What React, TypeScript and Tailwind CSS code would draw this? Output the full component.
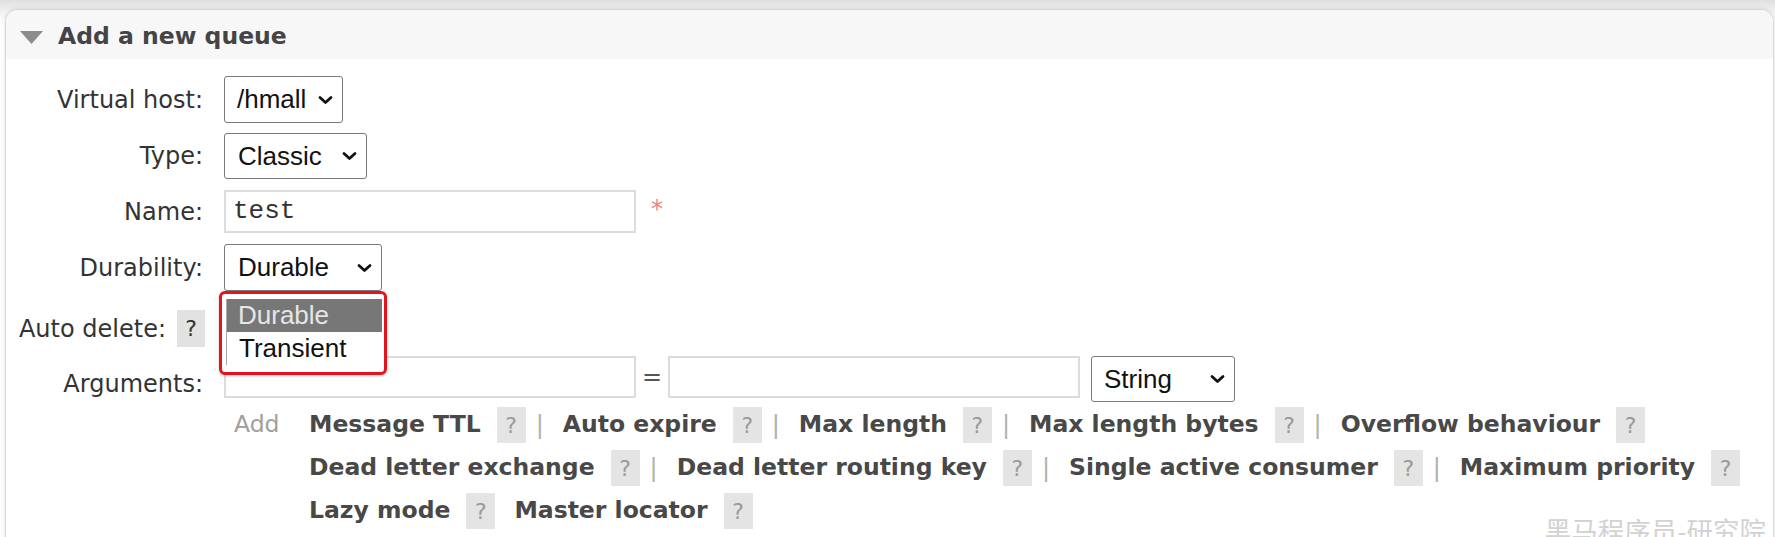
import React from 'react';

const sans = { fontFamily: '"DejaVu Sans", Verdana, sans-serif' };
const arial = { fontFamily: '"Liberation Sans", Arial, sans-serif' };

function Chevron() {
  return (
    <svg width="15" height="10" viewBox="0 0 15 10" className="shrink-0">
      <path d="M2 2.5 L7.5 7.5 L13 2.5" fill="none" stroke="#111" strokeWidth="2.8" strokeLinecap="round" strokeLinejoin="round" />
    </svg>
  );
}

function FakeSelect({ value, width, padLeft }: { value: string; width: string; padLeft: string }) {
  return (
    <div
      className={`flex items-center justify-between h-full ${width} ${padLeft} pr-[9px] border-[1.5px] border-[#7a7a7a] rounded-[3px] bg-white text-[26px] text-[#111]`}
      style={arial}
    >
      <span>{value}</span>
      <Chevron />
    </div>
  );
}

function Help({ dark }: { dark?: boolean }) {
  return (
    <span
      className={`inline-flex items-center justify-center w-[29px] h-[36px] bg-[#e4e4e4] text-[22px] ${
        dark ? 'text-[#333]' : 'text-[#9a9a9a]'
      }`}
      style={sans}
    >
      ?
    </span>
  );
}

function Sep() {
  return <span className="ml-[10px] mr-[19px] text-[24px] text-[#b0b0b0]">|</span>;
}

type Opt = { label: string; sep: boolean };

const rows: Opt[][] = [
  [
    { label: 'Message TTL', sep: true },
    { label: 'Auto expire', sep: true },
    { label: 'Max length', sep: true },
    { label: 'Max length bytes', sep: true },
    { label: 'Overflow behaviour', sep: false },
  ],
  [
    { label: 'Dead letter exchange', sep: true },
    { label: 'Dead letter routing key', sep: true },
    { label: 'Single active consumer', sep: true },
    { label: 'Maximum priority', sep: false },
  ],
  [
    { label: 'Lazy mode', sep: false },
    { label: 'Master locator', sep: false },
  ],
];

function Label({ children }: { children: React.ReactNode }) {
  return (
    <div className="w-[197px] text-right text-[24px] text-[#333] shrink-0" style={sans}>
      {children}
    </div>
  );
}

export default function App() {
  return (
    <div className="relative w-[1775px] h-[537px] overflow-hidden bg-[linear-gradient(to_bottom,#e0e0e0_0px,#ededed_9px,#ffffff_22px)]">
      <div className="ml-[5px] mr-[1px] mt-[9px] h-[560px] rounded-t-[13px] border border-[#d8d8d8] bg-white shadow-[0_0_4px_rgba(0,0,0,0.12)] overflow-hidden">
        {/* header */}
        <div className="flex items-center h-[49px] pt-[5px] pl-[14px] bg-[#f7f7f7]">
          <svg width="23" height="13" viewBox="0 0 23 13">
            <path d="M0 0 H23 L11.5 13 Z" fill="#8c8c8c" />
          </svg>
          <span className="ml-[15px] text-[23.5px] font-bold text-[#444]" style={sans}>
            Add a new queue
          </span>
        </div>

        <div className="flex flex-col">
          <div className="flex items-center h-[47px] mt-[17px]">
            <Label>Virtual host:</Label>
            <div className="ml-[21px] h-full">
              <FakeSelect value="/hmall" width="w-[119px]" padLeft="pl-[12px]" />
            </div>
          </div>

          <div className="flex items-center h-[46px] mt-[10px]">
            <Label>Type:</Label>
            <div className="ml-[21px] h-full">
              <FakeSelect value="Classic" width="w-[143px]" padLeft="pl-[13px]" />
            </div>
          </div>

          <div className="flex items-center h-[43px] mt-[11px]">
            <Label>Name:</Label>
            <div className="ml-[21px] h-full flex items-center">
              <div
                className="flex items-center h-full w-[412px] pl-[7px] border-2 border-[#dcdcdc] text-[26px] text-[#333]"
                style={{ fontFamily: '"Liberation Mono", "Courier New", monospace' }}
              >
                test
              </div>
              <span className="ml-[15px] mb-[6px] text-[24px] text-[#f08080]" style={sans}>
                *
              </span>
            </div>
          </div>

          <div className="flex items-center h-[47px] mt-[11px]">
            <Label>Durability:</Label>
            <div className="relative ml-[21px] h-full">
              <FakeSelect value="Durable" width="w-[158px]" padLeft="pl-[13px]" />
              <div className="absolute z-10 left-[-5px] top-[47px] w-[168px] h-[84px] border-[3px] border-[#e5141c] rounded-[6px] bg-white pl-[4px] pr-[2px] pt-[5px] shadow-[0_1px_3px_rgba(0,0,0,0.2)]">
                <div className="border-l border-[#a8a8a8] text-[26px]" style={arial}>
                  <div className="h-[33px] pl-[11px] flex items-center bg-[#777777] text-[#e6e6e6]">Durable</div>
                  <div className="h-[33px] pl-[12px] flex items-center text-[#111]">Transient</div>
                </div>
              </div>
            </div>
          </div>

          <div className="flex items-center h-[37px] mt-[19px]">
            <div className="w-[199px] flex items-center justify-end gap-[11px] shrink-0">
              <span className="text-[24px] text-[#333]" style={sans}>
                Auto delete:
              </span>
              <span
                className="inline-flex items-center justify-center w-[28px] h-[37px] bg-[#e2e2e2] text-[22px] text-[#333]"
                style={sans}
              >
                ?
              </span>
            </div>
          </div>

          <div className="flex items-center h-[46px] mt-[9px]">
            <Label>
              <span className="relative top-[5px]">Arguments:</span>
            </Label>
            <div className="ml-[21px] h-full flex items-start">
              <div className="h-[42px] w-[412px] border-2 border-[#dcdcdc]" />
              <span className="w-[32px] text-center text-[24px] text-[#555] leading-[42px]" style={sans}>
                =
              </span>
              <div className="h-[42px] w-[412px] border-2 border-[#dcdcdc]" />
              <div className="ml-[11px] h-full">
                <FakeSelect value="String" width="w-[144px]" padLeft="pl-[12px]" />
              </div>
            </div>
          </div>

          <div className="flex mt-[5px] ml-[212px]">
            <div className="w-[91px] pl-[16px] h-[36px] flex items-center text-[23.5px] text-[#a0a0a0]" style={sans}>
              Add
            </div>
            <div className="flex flex-col gap-[7px]">
              {rows.map((row, i) => (
                <div key={i} className="flex items-center h-[36px]" style={sans}>
                  {row.map((o, j) => (
                    <React.Fragment key={o.label}>
                      <span className={`text-[23.5px] font-bold text-[#484848] ${i === 2 && j > 0 ? 'ml-[19px]' : ''}`}>
                        {o.label}
                      </span>
                      <span className="ml-[16px]">
                        <Help />
                      </span>
                      {o.sep && <Sep />}
                    </React.Fragment>
                  ))}
                </div>
              ))}
            </div>
          </div>
        </div>
      </div>

      <div
        className="absolute right-[9px] top-[517px] text-[26.5px] text-[#d2d2d2] leading-none"
        style={{ fontFamily: '"Noto Sans CJK SC", sans-serif' }}
      >
        黑马程序员-研究院
      </div>
    </div>
  );
}
